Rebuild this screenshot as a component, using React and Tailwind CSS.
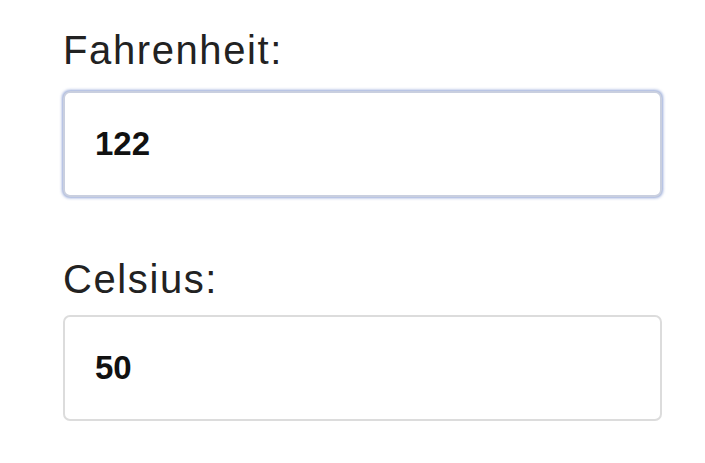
import React from "react";

const Field = ({ label, value, focused, className = "", gap = "mt-[21px]" }) => (
  <div className={"flex flex-col " + className}>
    <label className="text-[40px] leading-[40px] tracking-[1.6px] text-[#222]">
      {label}
    </label>
    <input
      readOnly
      value={value}
      className={
        gap +
        " h-[106px] w-[599px] rounded-[7px] bg-white px-[30px] text-[33px] font-bold text-[#111] outline-none " +
        (focused
          ? "border-2 border-[#c9cfdf] shadow-[0_0_3px_1px_rgba(110,135,200,0.75)]"
          : "border-2 border-[#dcdcdc]")
      }
    />
  </div>
);

export default function App() {
  return (
    <div className="min-h-screen bg-white pl-[63px] pt-[30px] font-['Liberation_Sans',Arial,sans-serif]">
      <Field label="Fahrenheit:" value="122" focused />
      <Field label="Celsius:" value="50" className="mt-[62px]" gap="mt-[16px]" />
    </div>
  );
}
